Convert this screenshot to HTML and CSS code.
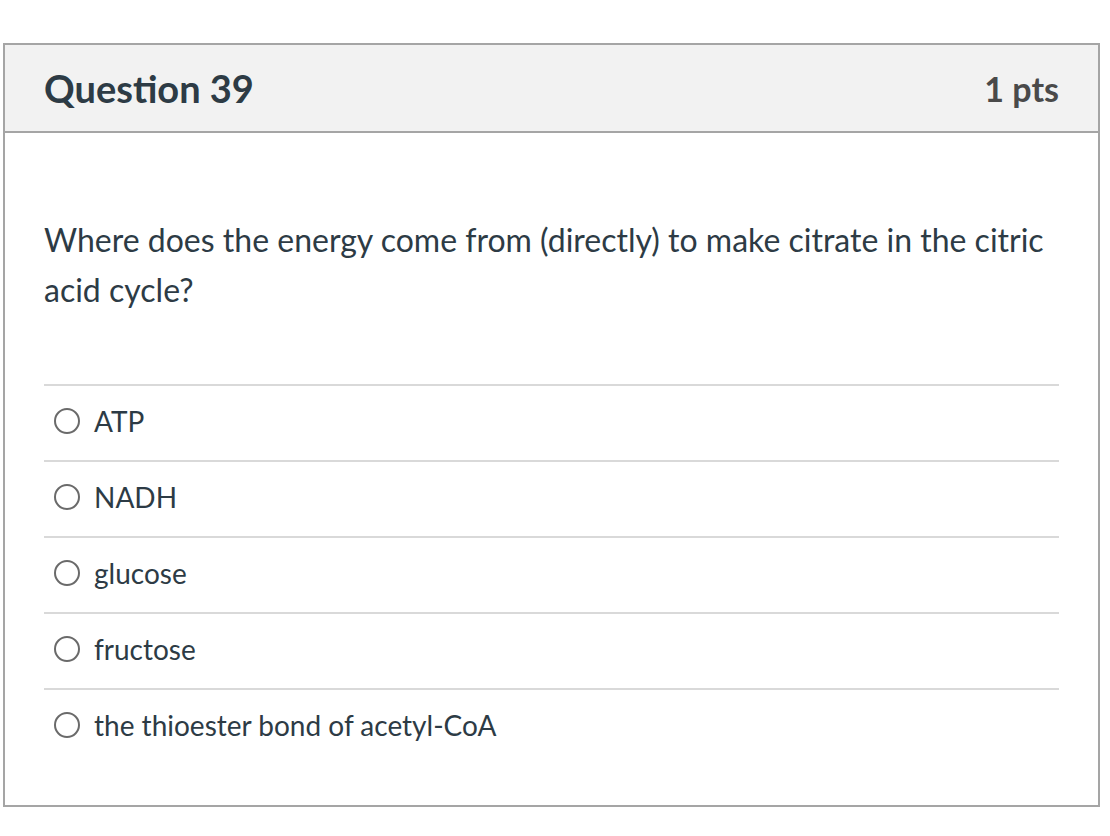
FILE: index.html
```html
<!DOCTYPE html>
<html>
<head>
<meta charset="utf-8">
<link rel="stylesheet" href="styles.css">
</head>
<body>
<div class="question">
  <div class="header">
    <h2 class="title">Question 39</h2>
    <div class="pts">1 pts</div>
  </div>
  <div class="content">
    <p class="text">Where does the energy come from (directly) to make citrate in the citric acid cycle?</p>
    <div class="answers">
      <label class="answer"><span class="radio"></span><span class="label">ATP</span></label>
      <label class="answer"><span class="radio"></span><span class="label">NADH</span></label>
      <label class="answer"><span class="radio"></span><span class="label">glucose</span></label>
      <label class="answer"><span class="radio"></span><span class="label">fructose</span></label>
      <label class="answer"><span class="radio"></span><span class="label">the thioester bond of acetyl-CoA</span></label>
    </div>
  </div>
</div>
</body>
</html>
```
FILE: styles.css
```css
html, body {
  margin: 0;
  padding: 0;
  background: #ffffff;
}
body {
  font-family: Lato, "Open Sans", sans-serif;
  color: #2d3b45;
  padding-top: 43px;
  padding-left: 3px;
}
.question {
  width: 1093px;
  border: 2px solid #a5a5a5;
  background: #fff;
}
.header {
  display: flex;
  justify-content: space-between;
  align-items: center;
  height: 86px;
  padding: 0 39px;
  background: #f2f2f2;
  border-bottom: 2px solid #a5a5a5;
}
.title {
  margin: 0;
  font-size: 38px;
  font-weight: 700;
  color: #2d3b45;
}
.pts {
  font-size: 34px;
  font-weight: 700;
  color: #4a4a4a;
}
.content {
  padding: 82px 39px 41px;
}
.text {
  margin: 0 0 69px;
  font-size: 32px;
  line-height: 50px;
}
.answer {
  display: flex;
  align-items: center;
  box-sizing: border-box;
  height: 76px;
  border-top: 2px solid #d9d9d9;
  padding: 0 0 4px 10px;
}
.radio {
  width: 22px;
  height: 22px;
  border: 2px solid #6a6a6a;
  border-radius: 50%;
  margin-right: 14px;
  flex: none;
}
.label {
  font-size: 28px;
}
```
